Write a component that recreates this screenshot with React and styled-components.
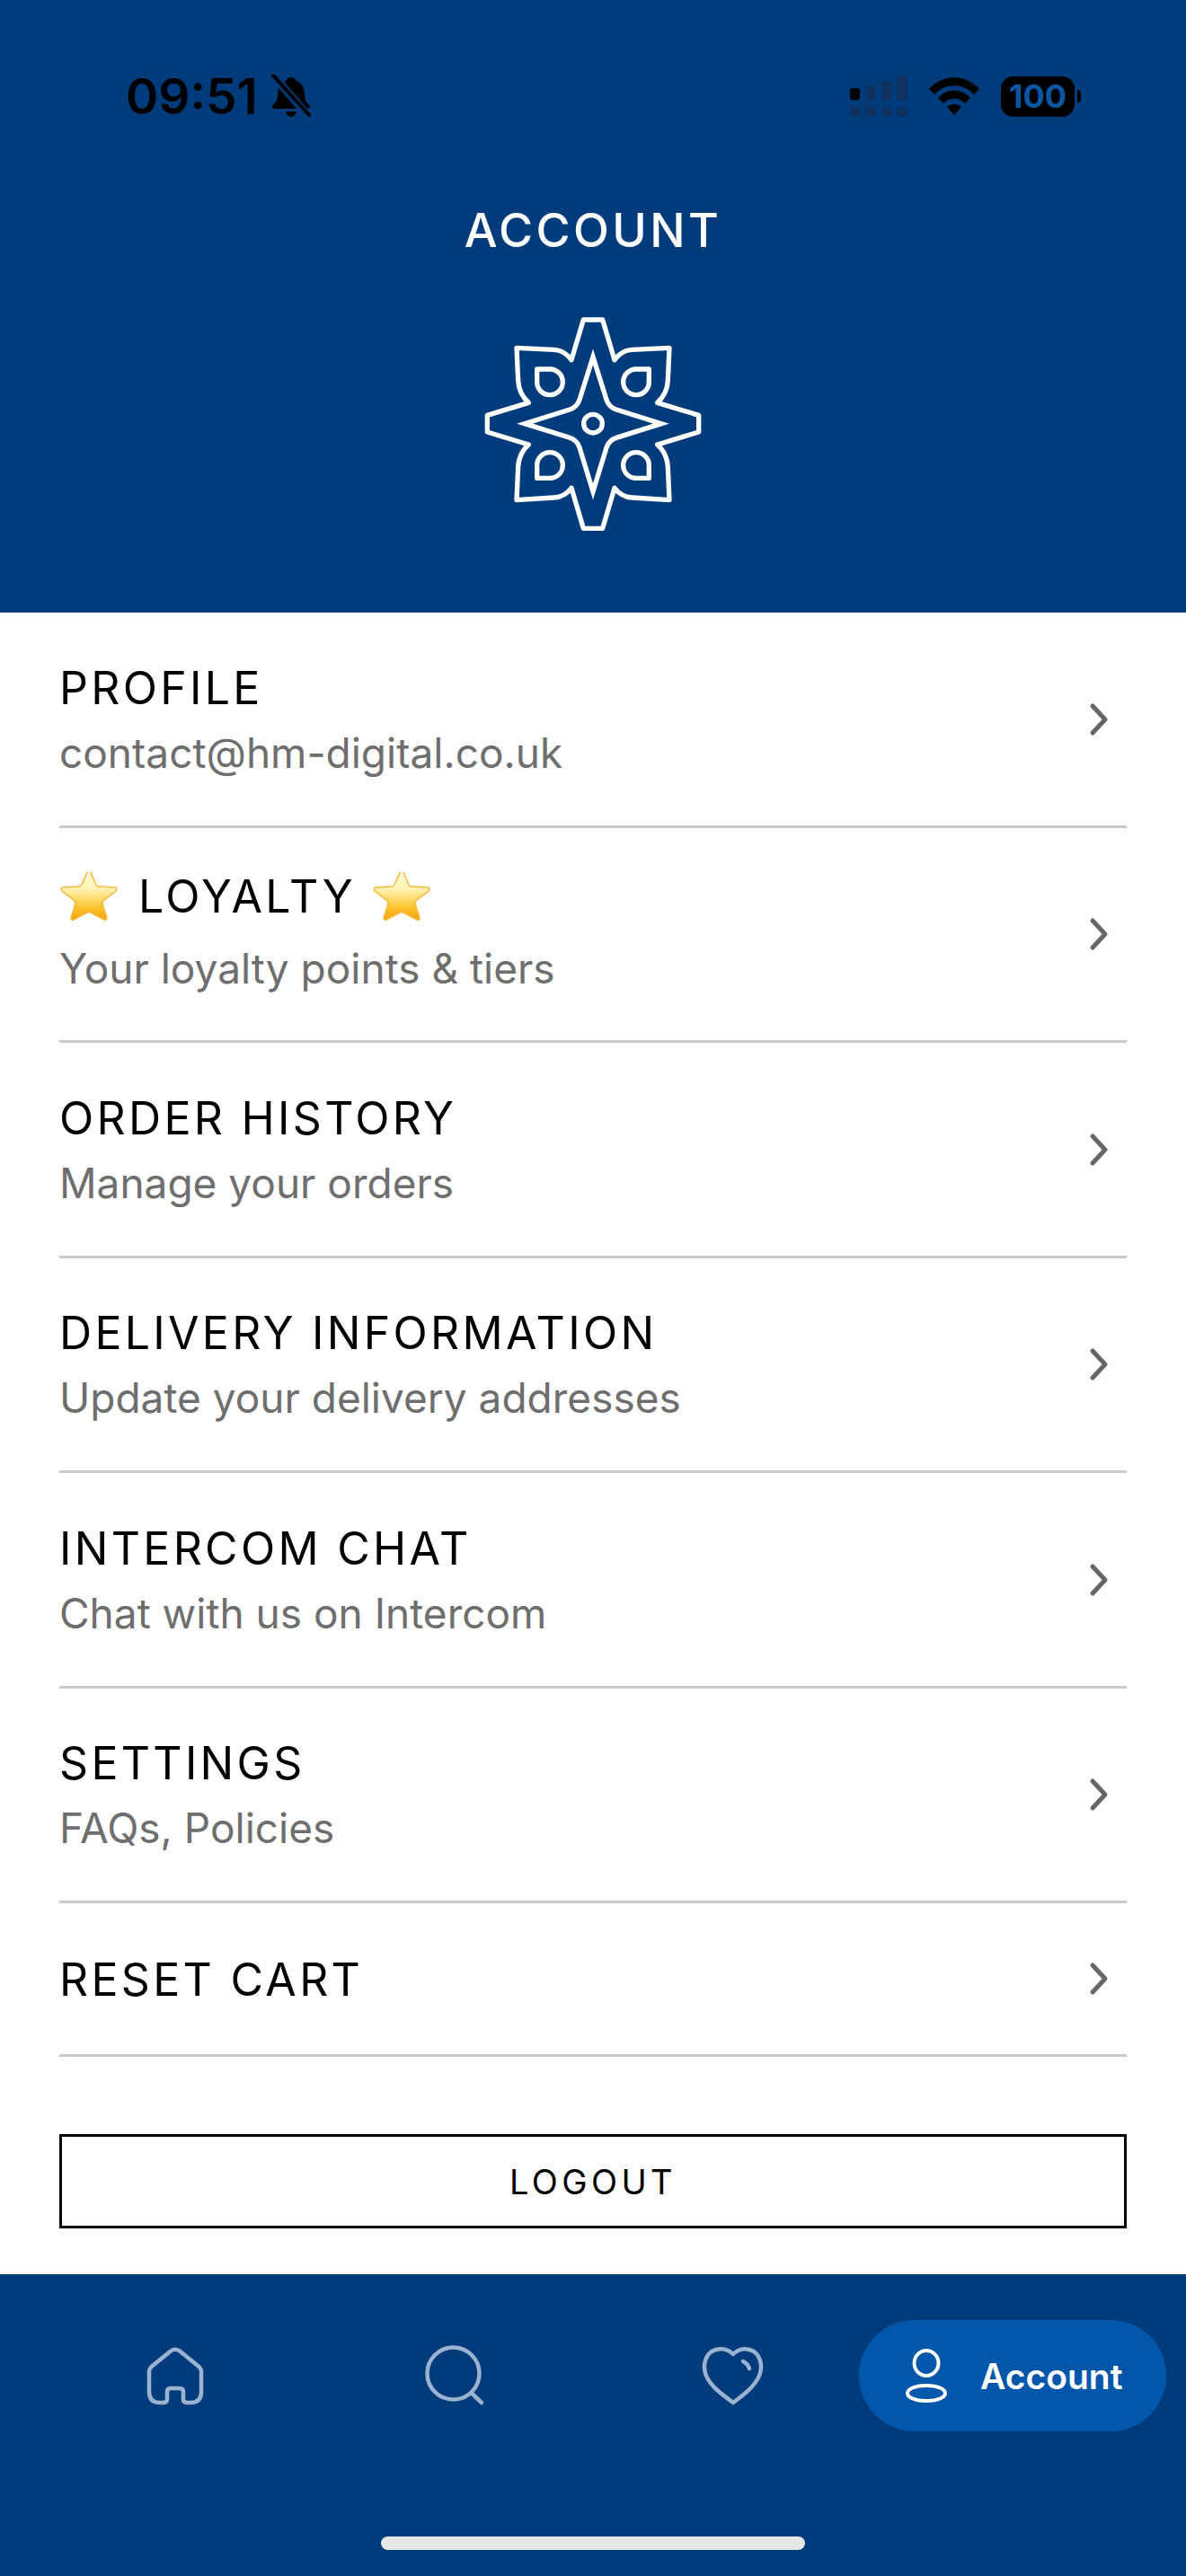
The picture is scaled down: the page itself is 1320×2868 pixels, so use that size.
import React from 'react';
import styled, { createGlobalStyle } from 'styled-components';

const GlobalStyle = createGlobalStyle`
	html, body {
		margin: 0;
		padding: 0;
		background: #fff;
	}
	body {
		font-family: Inter, "Liberation Sans", sans-serif;
	}
`;

const Page = styled.div`
	width: 1320px;
	height: 2868px;
	display: flex;
	flex-direction: column;
	overflow: hidden;
	background: #fff;
`;

const Header = styled.header`
	height: 682px;
	flex: none;
	display: flex;
	flex-direction: column;
	align-items: center;
	background: #003c7c;
`;

const StatusBar = styled.div`
	width: 100%;
	box-sizing: border-box;
	height: 80px;
	margin-top: 67px;
	padding: 0 124px 0 140px;
	display: flex;
	align-items: center;
	color: #000;
`;

const Time = styled.span`
	font-size: 55px;
	font-weight: 600;
	line-height: 80px;
	letter-spacing: 0;
`;

const Bell = styled.svg`
	width: 46px;
	height: 48px;
	margin-left: 14px;
`;

const StatusRight = styled.div`
	margin-left: auto;
	display: flex;
	align-items: center;
`;

const Signal = styled.svg`
	width: 64px;
	height: 46px;
`;

const Wifi = styled.svg`
	width: 56px;
	height: 42px;
	margin-left: 24px;
`;

const Battery = styled.div`
	width: 82px;
	height: 45px;
	margin-left: 24px;
	border-radius: 14px;
	background: #000;
	color: #0c56a4;
	font-size: 36px;
	font-weight: 700;
	line-height: 45px;
	text-align: center;
	position: relative;

	&::after {
		content: '';
		position: absolute;
		right: -7px;
		top: 15px;
		width: 4px;
		height: 14px;
		border-radius: 0 6px 6px 0;
		background: #000;
	}
`;

const PageTitle = styled.h1`
	margin: 78px 0 0;
	font-size: 52px;
	font-weight: 500;
	line-height: 64px;
	letter-spacing: 3.4px;
	color: #fff;
`;

const Logo = styled.svg`
	width: 300px;
	height: 280px;
	margin-top: 41px;
	flex: none;
`;

const Menu = styled.ul`
	list-style: none;
	margin: 0;
	padding: 0 66px;
`;

const Row = styled.li`
	height: ${(props) => props.$height}px;
	box-sizing: border-box;
	display: flex;
	align-items: center;
	justify-content: space-between;
	border-bottom: 3px solid #c9c9c9;
`;

const RowText = styled.div`
	display: flex;
	flex-direction: column;
	padding-top: 2px;
`;

const RowTitle = styled.div`
	display: flex;
	align-items: center;
	font-size: 50px;
	font-weight: 400;
	line-height: 64px;
	letter-spacing: 3.3px;
	color: #000;
	margin-top: ${(props) => (props.$raised ? '-6px' : '0')};
	margin-bottom: ${(props) => (props.$raised ? '8px' : '0')};
`;

const RowSub = styled.div`
	font-size: 46px;
	font-weight: 400;
	line-height: 64px;
	letter-spacing: 0;
	color: #6e6e6e;
	margin-top: 8px;
`;

const Star = styled.svg`
	width: 66px;
	height: 54px;
	flex: none;
	margin: ${(props) => (props.$trailing ? '0 0 0 18px' : '0 22px 0 0')};
`;

const Chevron = styled.svg`
	width: 28px;
	height: 42px;
	margin-right: 17px;
	flex: none;
`;

const LogoutButton = styled.button`
	display: block;
	box-sizing: border-box;
	width: 1188px;
	height: 105px;
	margin: 86px 66px 0;
	padding: 0;
	border: 3px solid #000;
	background: #fff;
	font-family: inherit;
	font-size: 38px;
	font-weight: 400;
	letter-spacing: 4.4px;
	color: #000;
`;

const Nav = styled.nav`
	margin-top: auto;
	height: 336px;
	flex: none;
	display: flex;
	flex-direction: column;
	background: #003c7c;
`;

const NavRow = styled.div`
	height: 124px;
	margin-top: 51px;
	padding-left: 40px;
	display: flex;
	align-items: center;
`;

const NavItem = styled.div`
	width: 310px;
	flex: none;
	display: flex;
	justify-content: center;
`;

const NavIcon = styled.svg`
	width: 72px;
	height: 72px;
	fill: none;
	stroke: #9bb3d1;
	stroke-width: 4.5;
	stroke-linecap: round;
	stroke-linejoin: round;
`;

const ActivePill = styled.div`
	width: 342px;
	height: 124px;
	box-sizing: border-box;
	margin-left: -14px;
	padding-left: 50px;
	display: flex;
	align-items: center;
	border-radius: 62px;
	background: #0357ab;
	color: #fff;
	font-size: 39px;
	font-weight: 600;
`;

const PersonIcon = styled.svg`
	width: 52px;
	height: 66px;
	margin-right: 33px;
	fill: none;
	stroke: #fff;
	stroke-width: 4;
`;

const HomeIndicator = styled.div`
	width: 472px;
	height: 15px;
	margin: 117px auto 0;
	border-radius: 8px;
	background: #e6e6e6;
`;

const menuItems = [
	{ title: 'PROFILE', sub: 'contact@hm-digital.co.uk', height: 240 },
	{ title: 'LOYALTY', sub: 'Your loyalty points & tiers', height: 239, stars: true },
	{ title: 'ORDER HISTORY', sub: 'Manage your orders', height: 240 },
	{ title: 'DELIVERY INFORMATION', sub: 'Update your delivery addresses', height: 239 },
	{ title: 'INTERCOM CHAT', sub: 'Chat with us on Intercom', height: 240 },
	{ title: 'SETTINGS', sub: 'FAQs, Policies', height: 239 },
	{ title: 'RESET CART', height: 171 },
];

const StarIcon = ({ id, trailing }) => (
	<Star $trailing={trailing} viewBox="0 0 66 54">
		<defs>
			<linearGradient id={id} x1="0" y1="0" x2="0" y2="1">
				<stop offset="0" stopColor="#fffbe6" />
				<stop offset="0.4" stopColor="#fff3b0" />
				<stop offset="0.75" stopColor="#fdc42f" />
				<stop offset="1" stopColor="#f5a109" />
			</linearGradient>
		</defs>
		<path
			d="M33 -4 L41 14 Q42 16 44 16 L62 17 Q65 18 63 21 L49 32 Q48 33 48 35 L53 51 Q53 54 50 53 L35 45 Q33 44 31 45 L16 53 Q13 54 13 51 L18 35 Q18 33 17 32 L3 21 Q1 18 4 17 L22 16 Q24 16 25 14 Z"
			fill={`url(#${id})`}
			stroke="#f4b93a"
			strokeWidth="1.5"
		/>
	</Star>
);

const drop = 'M263 243 H305 A43 43 0 1 1 263 286 Z';

const App = () => {
	return (
		<Page>
			<GlobalStyle />
			<Header>
				<StatusBar>
					<Time>09:51</Time>
					<Bell viewBox="0 0 46 48">
						<path
							d="M23 3 C26 3 28 5 28.500 7 C35 9 38 15 38 22 C38 28 40 31 43 34 C45 36 44 38 41 38 L5 38 C2 38 1 36 3 34 C6 31 8 28 8 22 C8 15 11 9 17.500 7 C18 5 20 3 23 3 Z M17 41 H29 C28 45 26 47 23 47 C20 47 18 45 17 41 Z"
							fill="#000"
						/>
						<path d="M4 2 L42 46" stroke="#003c7c" strokeWidth="9" />
						<path d="M3 1 L43 45" stroke="#000" strokeWidth="4" strokeLinecap="round" />
					</Bell>
					<StatusRight>
						<Signal viewBox="0 0 64 46">
							<rect x="0" y="14" width="11" height="13.500" rx="3" fill="#000" />
							<rect x="17.300" y="11" width="11" height="16.500" rx="3" fill="#0e3160" />
							<rect x="35" y="6" width="11" height="21.500" rx="3" fill="#0e3160" />
							<rect x="52.700" y="0" width="11" height="27.500" rx="3" fill="#0e3160" />
							<rect x="0" y="34.500" width="11" height="11" rx="3" fill="#0e3160" />
							<rect x="17.300" y="34.500" width="11" height="11" rx="3" fill="#0e3160" />
							<rect x="35" y="34.500" width="11" height="11" rx="3" fill="#0e3160" />
							<rect x="52.700" y="34.500" width="11" height="11" rx="3" fill="#0e3160" />
						</Signal>
						<Wifi viewBox="0 0 56 42">
							<path
								d="M0 13 C16 -4 40 -4 56 13 L50 19 C37 6 19 6 6 19 Z M10 23 C20 12 36 12 46 23 L40 29 C33 22 23 22 16 29 Z M20 33 C24 29 32 29 36 33 L28 42 Z"
								fill="#000"
							/>
						</Wifi>
						<Battery>100</Battery>
					</StatusRight>
				</StatusBar>
				<PageTitle>ACCOUNT</PageTitle>
				<Logo viewBox="0 0 900 840" fill="none" stroke="#fff" strokeWidth="16">
					<path
						strokeLinejoin="round"
						d="M418 78 H482 L522 212 Q545 180 580 178 L705 172 L700 280 Q698 325 665 355 L803 397 V453 L665 495 Q698 525 700 570 L705 680 L580 672 Q545 670 522 640 L482 775 H418 L378 640 Q355 670 320 672 L195 680 L200 570 Q202 525 235 495 L97 453 V397 L235 355 Q202 325 200 280 L195 172 L320 178 Q355 180 378 212 Z"
					/>
					<path
						strokeLinejoin="miter"
						strokeMiterlimit="12"
						d="M450 202 L495 345 Q503 370 528 378 L678 425 L528 472 Q503 480 495 505 L450 652 L405 505 Q397 480 372 472 L222 425 L372 378 Q397 370 405 345 Z"
					/>
					<circle cx="450" cy="425" r="31" />
					<path d={drop} strokeLinejoin="round" />
					<path d={drop} strokeLinejoin="round" transform="matrix(-1 0 0 1 900 0)" />
					<path d={drop} strokeLinejoin="round" transform="matrix(1 0 0 -1 0 850)" />
					<path d={drop} strokeLinejoin="round" transform="matrix(-1 0 0 -1 900 850)" />
				</Logo>
			</Header>
			<Menu>
				{menuItems.map((item) => (
					<Row key={item.title} $height={item.height}>
						<RowText>
							<RowTitle $raised={item.stars}>
								{item.stars && <StarIcon id="star-lead" />}
								{item.title}
								{item.stars && <StarIcon id="star-trail" trailing />}
							</RowTitle>
							{item.sub && <RowSub>{item.sub}</RowSub>}
						</RowText>
						<Chevron viewBox="0 0 28 42" fill="none" stroke="#666" strokeWidth="5" strokeLinecap="round" strokeLinejoin="round">
							<path d="M7 6 L21 21 L7 36" />
						</Chevron>
					</Row>
				))}
			</Menu>
			<LogoutButton>LOGOUT</LogoutButton>
			<Nav>
				<NavRow>
					<NavItem>
						<NavIcon viewBox="0 0 72 72">
							<path d="M9.500 26 L31 8.500 Q36 5 41 8.500 L62.500 26 Q65 28.500 65 32 V54 Q65 66 53 66 H49 Q45 66 45 62 V54 Q45 50 41 50 H31 Q27 50 27 54 V62 Q27 66 23 66 H19 Q7 66 7 54 V32 Q7 28.500 9.500 26 Z" />
						</NavIcon>
					</NavItem>
					<NavItem>
						<NavIcon viewBox="0 0 72 72">
							<circle cx="35.500" cy="33.500" r="29" />
							<path d="M56 55.500 L67 66" />
						</NavIcon>
					</NavItem>
					<NavItem>
						<NavIcon viewBox="0 0 72 72">
							<path d="M37 12 C43 6 52 4 60 9 C68 15 70 26 66 36 C61 48 49 57 37 66 C25 57 12 48 7 36 C3 26 5 15 13 9 C21 4 31 6 37 12 Z" />
							<path d="M48 20 C52 22 54 25 55 28" />
						</NavIcon>
					</NavItem>
					<ActivePill>
						<PersonIcon viewBox="0 0 52 66">
							<ellipse cx="25" cy="19" rx="13.500" ry="14" />
							<rect x="4" y="44" width="42" height="17" rx="20" ry="8.500" />
						</PersonIcon>
						Account
					</ActivePill>
				</NavRow>
				<HomeIndicator />
			</Nav>
		</Page>
	);
};

export default App;
